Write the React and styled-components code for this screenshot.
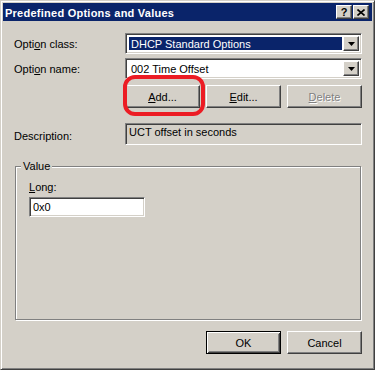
import React from "react";
import styled, { createGlobalStyle, css } from "styled-components";

const Global = createGlobalStyle`
  html, body { margin: 0; padding: 0; background: #d4d0c8; }
  body {
    font-family: "Liberation Sans", Arial, sans-serif;
    font-size: 11px;
    color: #000;
  }
`;

const raised = css`
  border: 1px solid;
  border-color: #fff #404040 #404040 #fff;
  box-shadow: inset -1px -1px #808080, inset 1px 1px #d4d0c8;
`;

const sunken = css`
  border: 1px solid;
  border-color: #808080 #fff #fff #808080;
  box-shadow: inset 1px 1px #404040, inset -1px -1px #d4d0c8;
`;

const Window = styled.div`
  width: 375px;
  height: 370px;
  box-sizing: border-box;
  border: 1px solid;
  border-color: #d4d0c8 #404040 #404040 #d4d0c8;
  box-shadow: inset 1px 1px #fff, inset -1px -1px #808080;
  padding: 2px;
  background: #d4d0c8;
  display: flex;
  flex-direction: column;
`;

const TitleBar = styled.div`
  height: 18px;
  flex: none;
  background: #0a246a;
  display: flex;
  align-items: center;
  padding: 0 3px 0 2px;
`;

const Title = styled.div`
  flex: 1;
  color: #fff;
  font-weight: bold;
  font-size: 11px;
  letter-spacing: 0.25px;
  padding-top: 1px;
`;

const TitleButtons = styled.div`
  display: flex;
  gap: 1px;
`;

const TitleButton = styled.div`
  width: 16px;
  height: 14px;
  box-sizing: border-box;
  ${raised}
  background: #d4d0c8;
  display: flex;
  align-items: center;
  justify-content: center;
  font-weight: bold;
  font-size: 11px;
  line-height: 1;
`;

const Body = styled.div`
  flex: 1;
  padding: 12px 10px 0 11px;
  display: flex;
  flex-direction: column;
`;

const FormGrid = styled.div`
  display: grid;
  grid-template-columns: 111px 237px;
  row-gap: 4px;
  align-items: center;
`;

const Label = styled.span`
  white-space: nowrap;
`;

const U = styled.span`
  text-decoration: underline;
`;

const ComboBox = styled.div`
  height: 21px;
  box-sizing: border-box;
  ${sunken}
  background: #fff;
  display: flex;
  padding: 2px;
`;

const ComboText = styled.div`
  flex: 1;
  margin: 1px;
  padding-left: 2px;
  display: flex;
  align-items: center;
  background: ${(p) => (p.$selected ? "#0a246a" : "transparent")};
  color: ${(p) => (p.$selected ? "#fff" : "#000")};
`;

const DropButton = styled.div`
  width: 16px;
  box-sizing: border-box;
  ${raised}
  background: #d4d0c8;
  display: flex;
  align-items: center;
  justify-content: center;
`;

const ButtonRow = styled.div`
  grid-column: 2;
  display: flex;
  gap: 6px;
  margin-top: 2px;
`;

const Button = styled.div`
  width: 75px;
  height: 23px;
  box-sizing: border-box;
  background: #d4d0c8;
  display: flex;
  align-items: center;
  justify-content: center;
  ${(p) =>
    p.$default
      ? css`
          border: 1px solid #000;
          box-shadow: inset 1px 1px #fff, inset -1px -1px #404040,
            inset 2px 2px #d4d0c8, inset -2px -2px #808080;
        `
      : raised}
  color: ${(p) => (p.$disabled ? "#808080" : "#000")};
  text-shadow: ${(p) => (p.$disabled ? "1px 1px #fff" : "none")};
`;

const AddWrap = styled.div`
  position: relative;
`;

const Highlight = styled.div`
  position: absolute;
  left: -2px;
  top: -10px;
  right: -5px;
  bottom: -8px;
  border: 4px solid #ec1c24;
  border-radius: 12px;
  pointer-events: none;
`;

const DescLabel = styled(Label)`
  margin-top: 11px;
  padding-top: 3px;
`;

const ReadOnlyField = styled.div`
  margin-top: 11px;
  height: 22px;
  box-sizing: border-box;
  ${sunken}
  background: #d4d0c8;
  padding: 2px 3px;
  display: flex;
  align-items: flex-start;
`;

const GroupBox = styled.div`
  position: relative;
  margin: 21px 1px 0 1px;
  height: 154px;
  box-sizing: border-box;
  border: 1px solid #808080;
  box-shadow: inset 1px 1px #fff, 1px 1px #fff;
  padding: 14px 13px 0 13px;
  display: flex;
  flex-direction: column;
  align-items: flex-start;
`;

const GroupTitle = styled.span`
  position: absolute;
  left: 5px;
  top: -7px;
  padding: 0 2px;
  background: #d4d0c8;
  line-height: 13px;
`;

const FieldLabel = styled.span`
  line-height: 13px;
  margin-bottom: 3px;
`;

const TextInput = styled.div`
  width: 116px;
  height: 20px;
  box-sizing: border-box;
  ${sunken}
  background: #fff;
  padding: 0 3px;
  display: flex;
  align-items: center;
`;

const Footer = styled.div`
  display: flex;
  justify-content: flex-end;
  gap: 6px;
  margin-top: 11px;
`;

const Arrow = () => (
  <svg width="7" height="4" viewBox="0 0 7 4">
    <polygon points="0,0 7,0 3.5,4" fill="#000" />
  </svg>
);

const CloseGlyph = () => (
  <svg width="8" height="7" viewBox="0 0 8 7">
    <path d="M0.5 0.5 L7.5 6.5 M7.5 0.5 L0.5 6.5" stroke="#000" strokeWidth="1.6" />
  </svg>
);

const Combo = ({ value, selected }) => (
  <ComboBox>
    <ComboText $selected={selected}>{value}</ComboText>
    <DropButton>
      <Arrow />
    </DropButton>
  </ComboBox>
);

export default function App() {
  return (
    <>
      <Global />
      <Window>
        <TitleBar>
          <Title>Predefined Options and Values</Title>
          <TitleButtons>
            <TitleButton>?</TitleButton>
            <TitleButton>
              <CloseGlyph />
            </TitleButton>
          </TitleButtons>
        </TitleBar>
        <Body>
          <FormGrid>
            <Label>
              Opti<U>o</U>n class:
            </Label>
            <Combo value="DHCP Standard Options" selected />
            <Label>
              Opti<U>o</U>n name:
            </Label>
            <Combo value="002 Time Offset" />
            <ButtonRow>
              <AddWrap>
                <Button>
                  <span>
                    <U>A</U>dd...
                  </span>
                </Button>
                <Highlight />
              </AddWrap>
              <Button>
                <span>
                  <U>E</U>dit...
                </span>
              </Button>
              <Button $disabled>
                <span>
                  <U>D</U>elete
                </span>
              </Button>
            </ButtonRow>
            <DescLabel>Description:</DescLabel>
            <ReadOnlyField>UCT offset in seconds</ReadOnlyField>
          </FormGrid>
          <GroupBox>
            <GroupTitle>Value</GroupTitle>
            <FieldLabel>
              <U>L</U>ong:
            </FieldLabel>
            <TextInput>0x0</TextInput>
          </GroupBox>
          <Footer>
            <Button $default>OK</Button>
            <Button>Cancel</Button>
          </Footer>
        </Body>
      </Window>
    </>
  );
}
